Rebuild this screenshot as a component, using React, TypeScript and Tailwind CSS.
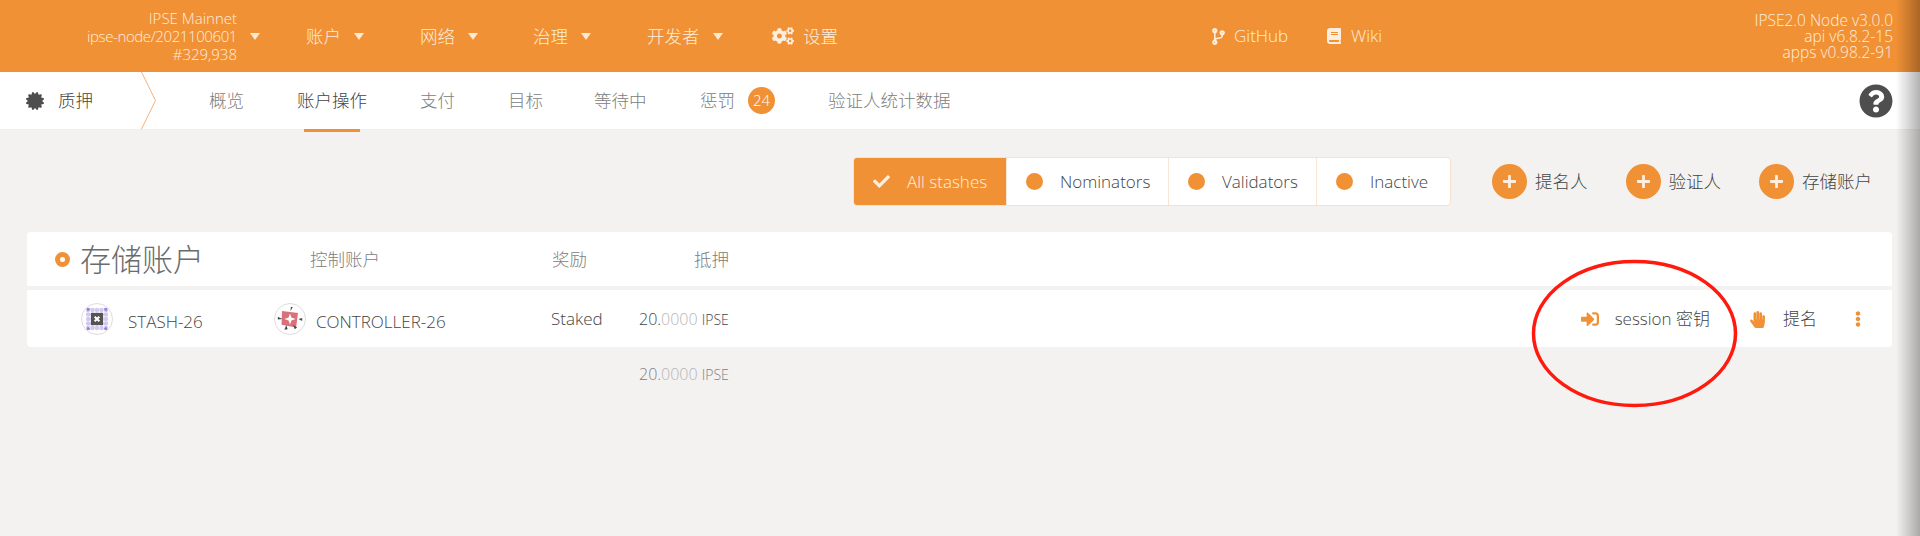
import {
  FaBook,
  FaCertificate,
  FaCheck,
  FaCodeBranch,
  FaCogs,
  FaEllipsisV,
  FaHandPaper,
  FaPlus,
  FaQuestionCircle,
  FaSignInAlt,
} from "react-icons/fa";

const font = "font-['Open_Sans','Noto_Sans_CJK_SC',sans-serif]";

function Caret() {
  return <span className="ml-[13px] h-0 w-0 border-x-[5px] border-t-[7px] border-x-transparent border-t-[#fde8d3]" />;
}

function NavItem({ label, width }: { label: string; width: string }) {
  return (
    <div className={`flex items-center ${width}`}>
      <span className="text-[17.5px] font-light">{label}</span>
      <Caret />
    </div>
  );
}

function Header() {
  return (
    <header className="flex h-[72px] items-center bg-[#f19135] pr-[27px] text-[#fdeedd]">
      <div className="flex w-[260px] items-center justify-end">
        <div className="text-right text-[15px] font-light leading-[18px]">
          <div>IPSE Mainnet</div>
          <div className="tracking-[-0.4px]">ipse-node/2021100601</div>
          <div>#329,938</div>
        </div>
        <Caret />
      </div>
      <div className="ml-[46px] flex">
        <NavItem label="账户" width="w-[114px]" />
        <NavItem label="网络" width="w-[113px]" />
        <NavItem label="治理" width="w-[114px]" />
        <NavItem label="开发者" width="w-[125px]" />
        <div className="flex w-[438px] items-center gap-[9px]">
          <FaCogs size={22} />
          <span className="text-[17.5px] font-light">设置</span>
        </div>
      </div>
      <div className="flex w-[116px] items-center gap-[7px]">
        <FaCodeBranch size={17} />
        <span className="text-[17px] font-light">GitHub</span>
      </div>
      <div className="flex items-center gap-[9px]">
        <FaBook size={16} />
        <span className="text-[17px] font-light">Wiki</span>
      </div>
      <div className="ml-auto text-right text-[15.5px] font-light leading-[16px]">
        <div>IPSE2.0 Node v3.0.0</div>
        <div>api v6.8.2-15</div>
        <div>apps v0.98.2-91</div>
      </div>
    </header>
  );
}

function SubNav() {
  const tabs = [
    { label: "概览", w: "w-[88px]" },
    { label: "账户操作", w: "w-[123px]", active: true },
    { label: "支付", w: "w-[88px]" },
    { label: "目标", w: "w-[86px]" },
    { label: "等待中", w: "w-[106px]" },
    { label: "惩罚", w: "w-[128px]", badge: "24" },
    { label: "验证人统计数据", w: "w-[160px]" },
  ];
  return (
    <nav className="flex h-[58px] items-center border-b border-[#eeeeee] bg-white pr-[27px]">
      <div className="flex w-[141px] items-center pl-[26px]">
        <FaCertificate size={18} className="mr-[14px] text-[#4e4e4e]" />
        <span className="text-[17.5px] font-light text-[#444444]">质押</span>
      </div>
      <svg className="h-[57px] w-[16px]" viewBox="0 0 16 57" fill="none">
        <path d="M0.500 0L14.500 28.500L0.500 57" stroke="#f5b27a" strokeWidth="1" />
      </svg>
      <div className="ml-[52px] flex items-center">
        {tabs.map((t) => (
          <div key={t.label} className={`relative flex h-[57px] items-center ${t.w}`}>
            <span className={`text-[17.5px] font-light ${t.active ? "text-[#444444]" : "text-[#808080]"}`}>{t.label}</span>
            {t.badge && (
              <span className="ml-[13px] flex h-[27px] w-[27px] items-center justify-center rounded-full bg-[#f19135] text-[15px] font-light text-white">
                {t.badge}
              </span>
            )}
            {t.active && <span className="absolute bottom-[-3px] left-[7px] h-[3px] w-[56px] bg-[#f19135]" />}
          </div>
        ))}
      </div>
      <FaQuestionCircle size={34} className="ml-auto text-[#4e4e4e]" />
    </nav>
  );
}

function Filter({ label, width, active, last }: { label: string; width: string; active?: boolean; last?: boolean }) {
  return (
    <div className={`flex h-full items-center pl-[19px] text-[17px] font-light ${width} ${active ? "bg-[#f19135] text-[#fdeedd]" : "text-[#444444]"} ${last ? "" : "border-r border-[#f7e6d8]"}`}>
      {active ? (
        <FaCheck size={17} className="mr-[17px]" />
      ) : (
        <span className="mr-[17px] h-[17px] w-[17px] rounded-full bg-[#f19135]" />
      )}
      {label}
    </div>
  );
}

function AddButton({ label }: { label: string }) {
  return (
    <div className="flex items-center gap-[8px]">
      <span className="flex h-[35px] w-[35px] items-center justify-center rounded-full bg-[#f19135]">
        <FaPlus size={15} className="text-[#fdeedd]" />
      </span>
      <span className="text-[17.5px] font-light text-[#444444]">{label}</span>
    </div>
  );
}

function StashIcon() {
  const dots: number[][] = [];
  for (let y = 0; y < 5; y++) {
    for (let x = 0; x < 5; x++) dots.push([6.5 + x * 4.75, 6.5 + y * 4.75]);
  }
  return (
    <svg width="32" height="32" viewBox="0 0 32 32" className="rounded-full border border-[#dddddd] bg-white">
      {dots.map(([x, y]) => (
        <circle key={`${x}-${y}`} cx={x} cy={y} r="2.400" fill="#d3c9f0" />
      ))}
      <path d="M5 4l4 1-3 3zM27 4l-4 1 3 3zM5 28l4-1-3-3zM27 28l-4-1 3-3z" fill="#8f78d8" />
      <rect x="9.500" y="9.500" width="13" height="13" fill="#555555" />
      <path d="M13.500 13.500l5 5M18.500 13.500l-5 5" stroke="#ffffff" strokeWidth="2.200" />
    </svg>
  );
}

function ControllerIcon() {
  return (
    <svg width="32" height="32" viewBox="0 0 32 32" className="rounded-full border border-[#dddddd] bg-white">
      <path d="M7.500 7.500l17 2-2 15.500-15.500-3z" fill="#d9707a" />
      <path d="M16 10l1.500 4.500L22 16l-4.500 1.500L16 22l-1.500-4.500L10 16l4.500-1.500z" fill="#ffffff" />
      <path d="M17 3l2 .5-2.500 4zM3 13.500l5 2.500-5 .5zM29 15l-4 1 4 2zM10 27.500l2-5 1.500 4.500zM21 27l-1.500-4.500 4 2.500z" fill="#4a4a4a" />
    </svg>
  );
}

function Amount() {
  return (
    <span className="whitespace-nowrap text-[16px] font-light">
      20.<span className="text-[#b5b5b5]">0000</span> <span className="text-[14px]">IPSE</span>
    </span>
  );
}

export default function App() {
  return (
    <div className={`relative h-[536px] overflow-hidden bg-[#f3f2f1] ${font}`}>
      <Header />
      <SubNav />
      <main className="pl-[27px] pr-[28px]">
        <div className="mt-[27px] flex items-center justify-end pr-[20px]">
          <div className="flex h-[49px] overflow-hidden rounded-[4px] border border-[#f7e0cd] bg-white">
            <Filter label="All stashes" width="w-[153px]" active />
            <Filter label="Nominators" width="w-[162px]" />
            <Filter label="Validators" width="w-[148px]" />
            <Filter label="Inactive" width="w-[133px]" last />
          </div>
          <div className="ml-[41px] flex items-center gap-[38px]">
            <AddButton label="提名人" />
            <AddButton label="验证人" />
            <AddButton label="存储账户" />
          </div>
        </div>
        <div className="mt-[26px] flex h-[54px] items-center rounded-t-[4px] bg-white">
          <span className="ml-[28px] flex h-[15px] w-[15px] items-center justify-center rounded-full bg-[#f19135]">
            <span className="h-[5px] w-[5px] rounded-full bg-white" />
          </span>
          <span className="ml-[10px] w-[230px] text-[31px] font-light text-[#6b6b6b]">存储账户</span>
          <span className="w-[242px] text-[17.5px] font-light text-[#808080]">控制账户</span>
          <span className="w-[142px] text-[17.5px] font-light text-[#808080]">奖励</span>
          <span className="text-[17.5px] font-light text-[#808080]">抵押</span>
        </div>
        <div className="mt-[4px] flex h-[57px] items-center rounded-b-[4px] bg-white pt-[1px] text-[#444444]">
          <span className="ml-[54px]"><StashIcon /></span>
          <span className="ml-[15px] mt-[6px] w-[146px] text-[17px] font-light">STASH-26</span>
          <ControllerIcon />
          <span className="ml-[10px] mt-[6px] w-[235px] text-[17px] font-light">CONTROLLER-26</span>
          <span className="w-[88px] text-[17px] font-light">Staked</span>
          <Amount />
          <div className="ml-auto flex items-center text-[17px] font-light">
            <FaSignInAlt size={18} className="text-[#f19135]" />
            <span className="ml-[16px]">session 密钥</span>
            <FaHandPaper size={17} className="ml-[39px] text-[#f19135]" />
            <span className="ml-[17px]">提名</span>
            <FaEllipsisV size={16} className="ml-[33px] mr-[26px] text-[#f19135]" />
          </div>
        </div>
        <div className="mt-[15px] ml-[612px] text-[#808080]"><Amount /></div>
      </main>
      <svg className="pointer-events-none absolute left-[1530px] top-[258px]" width="210" height="152" viewBox="0 0 210 152" fill="none">
        <ellipse cx="104.500" cy="75.500" rx="101" ry="72" stroke="#ff1a0d" strokeWidth="3.500" />
      </svg>
      <div className="pointer-events-none absolute right-0 top-0 h-full w-[24px] bg-gradient-to-r from-transparent to-black/30" />
    </div>
  );
}
